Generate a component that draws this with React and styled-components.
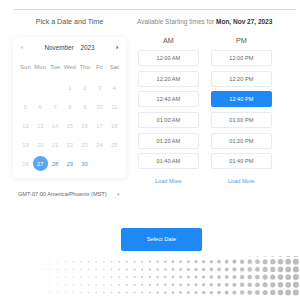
import React from "react";
import styled, { createGlobalStyle } from "styled-components";

const GlobalStyle = createGlobalStyle`
  body {
    margin: 0;
    font-family: "Liberation Sans", Arial, sans-serif;
    background: #fff;
  }
`;

const Page = styled.div`
  width: 300px;
  height: 300px;
  overflow: hidden;
  background: #fff;
`;

const Divider = styled.div`
  margin: 9px 4px 0 14px;
  border-top: 1px solid #d6d6d6;
`;

const Main = styled.div`
  display: flex;
  align-items: flex-start;
  padding-left: 13px;
  margin-top: 8px;
`;

const LeftColumn = styled.section`
  width: 113px;
`;

const RightColumn = styled.section`
  margin-left: 11px;
`;

const Title = styled.h2`
  margin: 0;
  font-size: 7.1px;
  line-height: 8px;
  font-weight: 400;
  color: #555;
  text-align: center;
`;

const Subtitle = styled.h3`
  margin: 0;
  font-size: 6.5px;
  line-height: 8px;
  font-weight: 400;
  color: #888;
  white-space: nowrap;

  b {
    color: #333;
    font-weight: 700;
  }
`;

const Card = styled.div`
  margin-top: 11px;
  height: 141px;
  box-sizing: border-box;
  padding: 0 4px 5px 5px;
  background: #fff;
  border-radius: 3px;
  box-shadow: 0 1px 6px rgba(0, 0, 0, 0.08);
`;

const CalHeader = styled.div`
  height: 20px;
  display: flex;
  align-items: center;
  justify-content: space-between;
  padding: 0 3px 0 2px;
`;

const MonthYear = styled.div`
  display: flex;
  gap: 7px;
  font-size: 6.3px;
  color: #444;
`;

const Grid = styled.div`
  display: grid;
  grid-template-columns: repeat(7, 14.8px);
  grid-auto-rows: 19px;
  margin-top: ${(p) => p.$mt || 0}px;
`;

const Cell = styled.div`
  display: flex;
  align-items: center;
  justify-content: center;
  font-size: ${(p) => (p.$weekday ? "6px" : "5.8px")};
  color: ${(p) =>
    p.$weekday ? "#9a9a9a" : p.$selected ? "#fff" : p.$active ? "#4a96f0" : "#cfcfcf"};
`;

const Selected = styled.span`
  width: 14.7px;
  height: 14.7px;
  border-radius: 50%;
  background: #5aa5f4;
  display: flex;
  align-items: center;
  justify-content: center;
`;

const Timezone = styled.div`
  margin-top: 12.5px;
  display: flex;
  align-items: center;
  justify-content: space-between;
  padding: 0 6px 0 5px;
  font-size: 5.6px;
  line-height: 7px;
  color: #666;
`;

const Caret = styled.span`
  color: #aaa;
  font-size: 5px;
`;

const TimesGrid = styled.div`
  display: grid;
  grid-template-columns: 60.7px 60.7px;
  column-gap: 12.3px;
  margin-top: 11.3px;
  padding-left: 1px;
`;

const TimeColumn = styled.div`
  display: flex;
  flex-direction: column;
  align-items: stretch;
`;

const ColumnLabel = styled.div`
  font-size: 7.2px;
  line-height: 8px;
  color: #555;
  text-align: center;
  margin-bottom: 4.7px;
`;

const Slots = styled.div`
  display: flex;
  flex-direction: column;
  gap: 4.66px;
`;

const Slot = styled.button`
  height: 16px;
  padding: 0;
  box-sizing: border-box;
  border: 1px solid ${(p) => (p.$active ? "#1e88f5" : "#e8ebef")};
  border-radius: 2px;
  background: ${(p) => (p.$active ? "#1e88f5" : "#fff")};
  color: ${(p) => (p.$active ? "#fff" : "#666")};
  font-family: inherit;
  font-size: 5.6px;
`;

const LoadMore = styled.div`
  margin-top: 9.2px;
  font-size: 5.6px;
  line-height: 7px;
  color: #5a9aea;
  text-align: center;
`;

const Footer = styled.div`
  margin-top: 29.5px;
  padding-left: 121px;
`;

const SelectButton = styled.button`
  width: 81px;
  height: 23px;
  border: none;
  border-radius: 2px;
  background: #1e88f5;
  color: #fff;
  font-family: inherit;
  font-size: 5.7px;
`;

const Dots = styled.svg`
  display: block;
  margin-top: 5px;
`;

const Chevron = ({ dir, color }) => (
  <svg width="3" height="5" viewBox="0 0 3 5">
    <path
      d={dir === "left" ? "M2.5 0.5 L0.5 2.5 L2.5 4.5 Z" : "M0.5 0.5 L2.5 2.5 L0.5 4.5 Z"}
      fill={color}
    />
  </svg>
);

const weekdays = ["Sun", "Mon", "Tue", "Wed", "Thu", "Fri", "Sat"];
const am = ["12:00 AM", "12:20 AM", "12:40 AM", "01:00 AM", "01:20 AM", "01:40 AM"];
const pm = ["12:00 PM", "12:20 PM", "12:40 PM", "01:00 PM", "01:20 PM", "01:40 PM"];

const days = [null, null, null];
for (let d = 1; d <= 30; d++) days.push(d);

const DotPattern = () => {
  const rows = [-2, 5.7, 13.4, 21.1, 28.8, 36.5];
  const dots = [];
  for (let i = 0; i < 39; i++) {
    const x = 4 + i * 7.68;
    const t = x / 296;
    const r = 0.45 + 2.6 * Math.pow(t, 2);
    const shade = Math.round(215 - 27 * t);
    const fill = `rgb(${shade},${shade},${shade})`;
    rows.forEach((y, j) => dots.push(<circle key={i + "-" + j} cx={x} cy={y} r={r} fill={fill} />));
  }
  return (
    <Dots width="300" height="45" viewBox="0 0 300 45">
      {dots}
    </Dots>
  );
};

export default function App() {
  return (
    <Page>
      <GlobalStyle />
      <Divider />
      <Main>
        <LeftColumn>
          <Title>Pick a Date and Time</Title>
          <Card>
            <CalHeader>
              <Chevron dir="left" color="#cccccc" />
              <MonthYear>
                <span>November</span>
                <span>2023</span>
              </MonthYear>
              <Chevron dir="right" color="#1e88f5" />
            </CalHeader>
            <Grid>
              {weekdays.map((w) => (
                <Cell key={w} $weekday>
                  {w}
                </Cell>
              ))}
            </Grid>
            <Grid $mt={2}>
              {days.map((d, i) => (
                <Cell key={i} $active={d > 27} $selected={d === 27}>
                  {d === 27 ? <Selected>27</Selected> : d}
                </Cell>
              ))}
            </Grid>
          </Card>
          <Timezone>
            <span>GMT-07:00 America/Phoenix (MST)</span>
            <Caret>▾</Caret>
          </Timezone>
        </LeftColumn>
        <RightColumn>
          <Subtitle>
            Available Starting times for <b>Mon, Nov 27, 2023</b>
          </Subtitle>
          <TimesGrid>
            <TimeColumn>
              <ColumnLabel>AM</ColumnLabel>
              <Slots>
                {am.map((t) => (
                  <Slot key={t}>{t}</Slot>
                ))}
              </Slots>
              <LoadMore>Load More</LoadMore>
            </TimeColumn>
            <TimeColumn>
              <ColumnLabel>PM</ColumnLabel>
              <Slots>
                {pm.map((t) => (
                  <Slot key={t} $active={t === "12:40 PM"}>
                    {t}
                  </Slot>
                ))}
              </Slots>
              <LoadMore>Load More</LoadMore>
            </TimeColumn>
          </TimesGrid>
        </RightColumn>
      </Main>
      <Footer>
        <SelectButton>Select Date</SelectButton>
      </Footer>
      <DotPattern />
    </Page>
  );
}
